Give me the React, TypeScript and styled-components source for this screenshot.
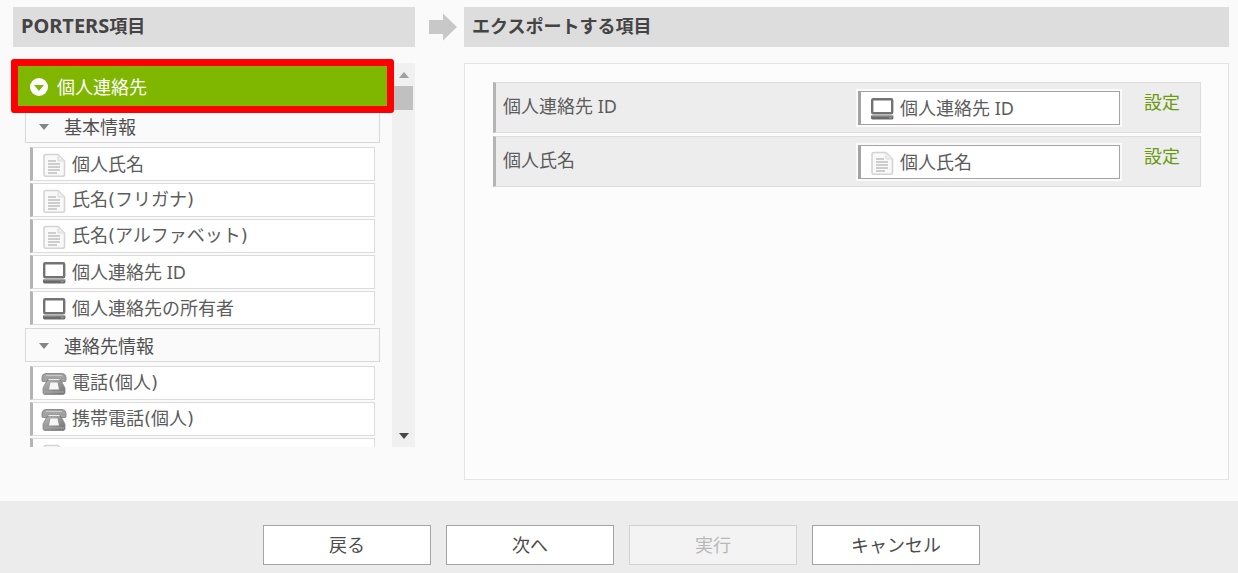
import React from 'react';
import styled, { createGlobalStyle, css } from 'styled-components';

const GlobalStyle = createGlobalStyle`
  * { box-sizing: border-box; }
  body {
    margin: 0;
    background: #fafafa;
    color: #5c5c5c;
    font: 18px/26px 'Noto Sans', 'Noto Sans CJK JP', sans-serif;
  }
  button { font: inherit; color: inherit; cursor: pointer; }
  ul { margin: 0; padding: 0; list-style: none; }
`;

const Page = styled.div`
  display: flex;
  flex-direction: column;
  min-height: 100vh;
`;

const Main = styled.main`
  display: grid;
  grid-template-columns: minmax(0, 402fr) 49px minmax(0, 765fr);
  row-gap: 16px;
  padding: 7px 9px 21px 13px;
`;

const PanelTitle = styled.h2`
  margin: 0;
  padding: 6px 8px 8px;
  height: 40px;
  background: #ddd;
  color: #444;
  font-size: 18px;
  line-height: 26px;
  font-weight: 700;
`;

const Brand = styled.span`
  font-size: 20px;
`;

const ArrowCell = styled.div`
  display: flex;
  align-items: center;
  justify-content: center;
  padding-left: 6px;
`;

const Source = styled.section`
  position: relative;
  display: flex;
  height: 384px;
`;

const Viewport = styled.div`
  flex: 1;
  min-width: 0;
  overflow: hidden;
  padding-right: 2px;
`;

const Category = styled.button`
  display: flex;
  align-items: center;
  gap: 9px;
  width: 100%;
  height: 46px;
  padding: 2px 17px 0;
  border: 0;
  background: #7fb600;
  color: #fff;
`;

const Highlight = styled.div`
  position: absolute;
  top: -4px;
  left: -2px;
  right: 21px;
  height: 54px;
  border: 7px solid #f00;
  border-radius: 3px;
  pointer-events: none;
`;

const GroupHeader = styled.button`
  display: flex;
  align-items: center;
  gap: 15px;
  width: calc(100% - 22px);
  height: 34px;
  margin: 0 10px 0 12px;
  padding: 2px 13px 0;
  border: 1px solid #d8d8d8;
  background: #fafafa;
  color: #505050;
`;

const Fields = styled.ul`
  display: flex;
  flex-direction: column;
  gap: 2px;
  padding: 4px 15px 3px 17px;
`;

const chip = css`
  display: flex;
  align-items: center;
  gap: 6px;
  height: 34px;
  padding: 0 9px;
  background: #fff;
  white-space: nowrap;
`;

const Field = styled.li<{ $wide: boolean }>`
  ${chip}
  border: 1px solid #dcdcdc;
  border-left: 3px solid #b4b4b4;
  cursor: move;
  ${({ $wide }) => $wide && css`font-family: 'DejaVu Sans', 'Noto Sans CJK JP', sans-serif;`}
`;

const Scrollbar = styled.div`
  display: flex;
  flex-direction: column;
  align-items: center;
  width: 23px;
  background: #f0f0f0;
`;

const ScrollButton = styled.button`
  display: flex;
  align-items: center;
  justify-content: center;
  width: 23px;
  height: 23px;
  padding: 0;
  border: 0;
  background: none;
`;

const ScrollTrack = styled.div`
  flex: 1;
  width: 19px;
`;

const ScrollThumb = styled.div`
  height: 24px;
  background: #c0c0c0;
`;

const Target = styled.section`
  grid-column: 3;
  min-height: 417px;
  padding: 18px 27px 18px 28px;
  border: 1px solid #e4e4e4;
  background: #fcfcfc;
`;

const ExportList = styled.ul`
  display: flex;
  flex-direction: column;
  gap: 3px;
`;

const ExportRow = styled.li`
  display: flex;
  align-items: flex-start;
  height: 51px;
  padding: 6px 20px 0 7px;
  border: 1px solid #ddd;
  border-left: 3px solid #b4b4b4;
  background: #ededed;
`;

const ExportName = styled.span`
  flex: 1;
  padding-top: 4px;
`;

const DropBox = styled.div`
  ${chip}
  width: 262px;
  margin: 2px 24px 0 0;
  border: 1px solid #a4a4a4;
  border-left: 3px solid #a4a4a4;
  box-shadow: 0 0 0 2px #fafafa;
`;

const SettingLink = styled.a`
  color: #6a9a10;
  text-decoration: none;
`;

const Footer = styled.footer`
  flex: 1;
  display: flex;
  align-items: flex-start;
  justify-content: center;
  gap: 15px;
  padding: 24px 0 8px 5px;
  background: #ececec;
`;

const ActionButton = styled.button`
  width: 168px;
  height: 40px;
  padding: 0;
  border: 1px solid #a4a4a4;
  background: #fff;
  color: #4c4c4c;
  &:disabled {
    border-color: #d2d2d2;
    background: #f3f3f3;
    color: #b8b8b8;
    cursor: default;
  }
`;

const Icon = styled.svg`
  display: block;
  flex: none;
`;

const IconSlot = styled.span`
  display: flex;
  justify-content: center;
  flex: none;
  width: 24px;
  padding-top: 2px;
`;

type Kind = 'text' | 'system' | 'phone';

const DocumentIcon = () => (
  <Icon width="24" height="24" viewBox="0 0 24 24" aria-hidden="true">
    <path d="M2 3.5Q2 1.5 4 1.5H16L22.5 8V21.5Q22.5 23.2 20.500 23.200H4Q2 23.200 2 21.500Z" fill="#f9f9f9" stroke="#d4d4d4" strokeWidth="1.6" />
    <path d="M16 2V8H22" fill="#eee" stroke="#dcdcdc" />
    <path d="M6 8H14M6 11H18M6 14H18M6 17H18M6 20H15" stroke="#bebebe" strokeWidth="1.4" />
  </Icon>
);

const ComputerIcon = () => (
  <Icon width="24" height="24" viewBox="0 0 24 24" aria-hidden="true">
    <rect x="2.2" y="2.2" width="20" height="14" rx="1" fill="#fff" stroke="#737373" strokeWidth="2.4" />
    <path d="M1 18.500H23.400V21Q23.400 22.400 22 22.400H2.500Q1 22.400 1 21Z" fill="#6a6a6a" />
    <path d="M1.500 19H23" stroke="#9a9a9a" />
    <path d="M19 20.800H21.500" stroke="#aaa" />
  </Icon>
);

const PhoneIcon = () => (
  <Icon width="26" height="24" viewBox="0 0 26 24" aria-hidden="true">
    <defs>
      <linearGradient id="phoneBody" x1="0" y1="0" x2="1" y2="1">
        <stop offset="0" stopColor="#b8b8b8" />
        <stop offset="1" stopColor="#707070" />
      </linearGradient>
    </defs>
    <path d="M6 8.500H20L24 16V20.500Q24 22.500 22 22.500H4Q2 22.500 2 20.500V16Z" fill="url(#phoneBody)" stroke="#858585" strokeWidth=".8" />
    <path d="M1 8.500V5Q1.500 1.500 5 1.500H21Q24.500 1.500 25 5V8.500Q25 9.500 24 9.500H20L18.500 6.500H7.500L6 9.500H2Q1 9.500 1 8.500Z" fill="#a2a2a2" stroke="#7c7c7c" strokeWidth=".8" />
    <path d="M5 3.500H21" stroke="#c8c8c8" strokeWidth="1.200" />
    <path d="M8 7.500H18" stroke="#e4e4e4" strokeWidth="1.600" strokeDasharray="2 1" />
    <path d="M9.500 10.500H16.500L18 17.500H8Z" fill="#f6f6f6" />
    <path d="M3 20H23" stroke="#aaa" />
  </Icon>
);

const icons: Record<Kind, () => React.JSX.Element> = {
  text: DocumentIcon,
  system: ComputerIcon,
  phone: PhoneIcon,
};

const KindIcon = ({ kind }: { kind: Kind }) => {
  const Glyph = icons[kind];
  return <IconSlot><Glyph /></IconSlot>;
};

const Triangle = ({ up, color }: { up?: boolean; color: string }) => (
  <Icon width="10" height="6" viewBox="0 0 10 6" aria-hidden="true">
    <path d={up ? 'M0 6L5 0L10 6Z' : 'M0 0H10L5 6Z'} fill={color} />
  </Icon>
);

const groups: { title: string; fields: { kind: Kind; name: string }[] }[] = [
  {
    title: '基本情報',
    fields: [
      { kind: 'text', name: '個人氏名' },
      { kind: 'text', name: '氏名(フリガナ)' },
      { kind: 'text', name: '氏名(アルファベット)' },
      { kind: 'system', name: '個人連絡先 ID' },
      { kind: 'system', name: '個人連絡先の所有者' },
    ],
  },
  {
    title: '連絡先情報',
    fields: [
      { kind: 'phone', name: '電話(個人)' },
      { kind: 'phone', name: '携帯電話(個人)' },
      { kind: 'text', name: '' },
    ],
  },
];

const exported: { kind: Kind; name: string }[] = [
  { kind: 'system', name: '個人連絡先 ID' },
  { kind: 'text', name: '個人氏名' },
];

export default function App() {
  return (
    <Page>
      <GlobalStyle />
      <Main>
        <PanelTitle><Brand>PORTERS</Brand>項目</PanelTitle>
        <ArrowCell>
          <Icon width="28" height="28" viewBox="0 0 28 28" aria-hidden="true">
            <path d="M0 7H14V0.500L28 14L14 27.500V21H0Z" fill="#c8c8c8" />
          </Icon>
        </ArrowCell>
        <PanelTitle>エクスポートする項目</PanelTitle>

        <Source>
          <Viewport>
            <Category type="button">
              <Icon width="18" height="18" viewBox="0 0 18 18" aria-hidden="true">
                <circle cx="9" cy="9" r="9" fill="#fff" />
                <path d="M4 7H14L9 13Z" fill="#7fb600" />
              </Icon>
              個人連絡先
            </Category>
            {groups.map((group) => (
              <React.Fragment key={group.title}>
                <GroupHeader type="button">
                  <Triangle color="#858585" />
                  {group.title}
                </GroupHeader>
                <Fields>
                  {group.fields.map((field) => (
                    <Field key={field.name} $wide={field.name.includes('(')}>
                      <KindIcon kind={field.kind} />
                      {field.name}
                    </Field>
                  ))}
                </Fields>
              </React.Fragment>
            ))}
          </Viewport>
          <Scrollbar>
            <ScrollButton type="button" aria-label="上へ"><Triangle up color="#a0a0a0" /></ScrollButton>
            <ScrollTrack><ScrollThumb /></ScrollTrack>
            <ScrollButton type="button" aria-label="下へ"><Triangle color="#484848" /></ScrollButton>
          </Scrollbar>
          <Highlight />
        </Source>

        <Target>
          <ExportList>
            {exported.map((item) => (
              <ExportRow key={item.name}>
                <ExportName>{item.name}</ExportName>
                <DropBox>
                  <KindIcon kind={item.kind} />
                  {item.name}
                </DropBox>
                <SettingLink href="#">設定</SettingLink>
              </ExportRow>
            ))}
          </ExportList>
        </Target>
      </Main>
      <Footer>
        <ActionButton type="button">戻る</ActionButton>
        <ActionButton type="button">次へ</ActionButton>
        <ActionButton type="button" disabled>実行</ActionButton>
        <ActionButton type="button">キャンセル</ActionButton>
      </Footer>
    </Page>
  );
}
